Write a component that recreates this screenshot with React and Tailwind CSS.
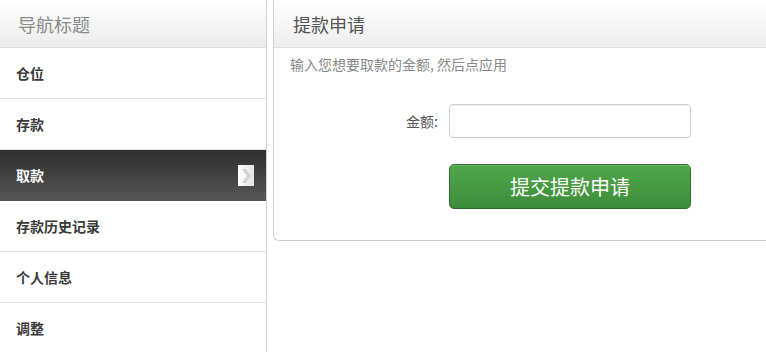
import React, { useState } from "react";

const navItems = ["仓位", "存款", "取款", "存款历史记录", "个人信息", "调整"];

function App() {
	const [active, setActive] = useState("取款");
	const [amount, setAmount] = useState("");

	return (
		<div
			className="flex w-[766px] h-[352px] overflow-hidden bg-white"
			style={{ fontFamily: '"Noto Sans CJK SC", "Noto Sans", sans-serif' }}
		>
			{/* sidebar */}
			<div className="w-[267px] shrink-0 border-r border-[#cfcfcf] flex flex-col">
				<div className="h-[48px] shrink-0 border-b border-[#dedede] bg-gradient-to-b from-white to-[#ececec] flex items-center pl-[18px]">
					<span className="text-[18px] text-[#8a8a8a] leading-none">导航标题</span>
				</div>
				{navItems.map((item) =>
					item === active ? (
						<div
							key={item}
							className="h-[51px] shrink-0 flex items-center justify-between pl-[16px] pr-[12px] bg-gradient-to-b from-[#2e2e2e] to-[#575757]"
						>
							<span className="text-[14px] font-bold text-white">{item}</span>
							<span className="w-[16px] h-[21px] bg-gradient-to-r from-white to-[#e4e4e4] flex items-center justify-center">
								<svg width="12" height="16" viewBox="0 0 12 16">
									<path d="M2 1 L6 1 L11 8 L6 15 L2 15 L7 8 Z" fill="#d4d4d4" />
								</svg>
							</span>
						</div>
					) : (
						<div
							key={item}
							onClick={() => setActive(item)}
							className="h-[51px] shrink-0 flex items-center pl-[16px] border-b border-[#e3e3e3] cursor-pointer"
						>
							<span className="text-[14px] font-bold text-[#3a3a3a]">{item}</span>
						</div>
					)
				)}
			</div>

			{/* main panel */}
			<div className="flex-1 pl-[6px]">
				<div className="w-[520px] h-[241px] border-l border-b border-[#d0d0d0] rounded-bl-[6px] flex flex-col">
					<div className="h-[48px] shrink-0 border-b border-[#e0e0e0] bg-gradient-to-b from-white to-[#ededed] flex items-center pl-[19px]">
						<span className="text-[18px] text-[#555] leading-none">提款申请</span>
					</div>
					<div className="pl-[16px] pt-[6px] text-[14px] text-[#888] leading-[20px]">
						输入您想要取款的金额, 然后点应用
					</div>
					<div className="flex items-center mt-[30px]">
						<label className="w-[175px] text-right pr-[11px] text-[14px] text-[#555]">金额:</label>
						<input
							value={amount}
							onChange={(e) => setAmount(e.target.value)}
							className="w-[242px] h-[34px] border border-[#cccccc] rounded-[4px] px-2 text-[13px] outline-none shadow-[inset_0_1px_1px_rgba(0,0,0,0.05)]"
						/>
					</div>
					<div className="flex mt-[26px] pl-[175px]">
						<button className="w-[242px] h-[45px] rounded-[5px] border border-[#2f6f2b] bg-gradient-to-b from-[#51a74c] to-[#3d8c39] text-white text-[20px] shadow-[inset_0_1px_0_rgba(255,255,255,0.2)]">
							提交提款申请
						</button>
					</div>
				</div>
			</div>
		</div>
	);
}

export default App;
